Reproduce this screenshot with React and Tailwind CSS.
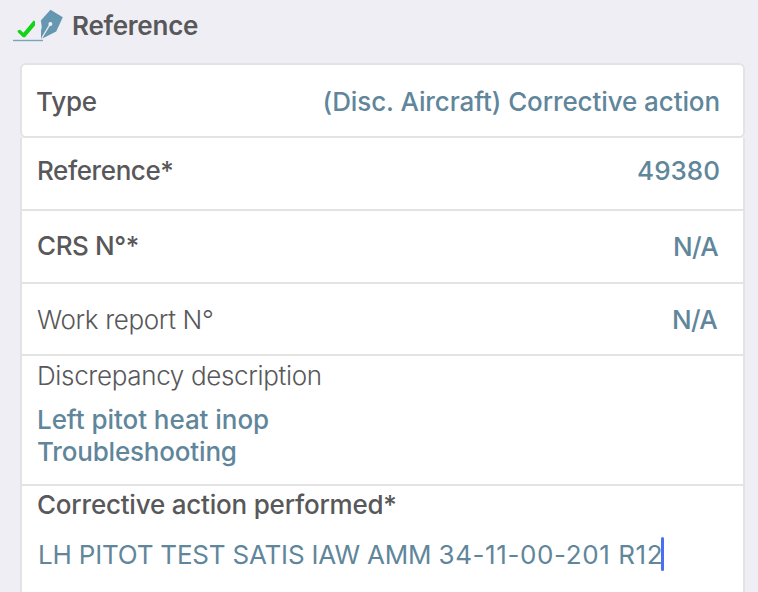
function SignIcon() {
  return (
    <svg width="52" height="34" viewBox="0 0 52 34" className="block shrink-0">
      <path d="M0 31.5H30" stroke="#78a5bb" strokeWidth="1.4" />
      <path d="M4.6 21.6L7.2 20.8L10.4 23.8L20.6 11.6L22 12.2V16.4L12 28.2L10 28.2L4.6 23Z" fill="#14d418" />
      <path d="M37.5 0.8L49.8 8.2L43.2 22.6L31.4 28.4L28 29.6L28 21.5L28.8 18L27.8 11.6Z" fill="#6697b0" />
      <path d="M28.8 29L36.8 15.6" stroke="#f0eff5" strokeWidth="1.2" />
      <circle cx="37.4" cy="15" r="2" fill="#f0eff5" />
    </svg>
  )
}

function Row({ className, children }) {
  return <div className={`flex justify-between border-x-2 border-b-2 border-[#e3e3e4] bg-white pl-[15px] ${className}`}>{children}</div>
}

export default function App() {
  return (
    <div className="flex h-[592px] w-[758px] flex-col overflow-hidden bg-[#efeef4] font-['Inter',sans-serif] text-[26px] leading-8 font-medium whitespace-nowrap text-[#58585a]">
      <div className="flex h-[63px] shrink-0 items-start pt-[9px] pl-[13px]">
        <SignIcon />
        <h1 className="mt-px ml-[7px] font-semibold tracking-[-0.25px]">Reference</h1>
      </div>

      <div className="box-content flex w-[725px] flex-col pl-5">
        <Row className="h-[75px] rounded-md border-t-2 pt-[21px] pr-[23px]">
          <span className="-ml-px tracking-[-0.2px]">Type</span>
          <span className="tracking-[-0.1px] text-[#5f869b]">(Disc. Aircraft) Corrective action</span>
        </Row>
        <Row className="h-[73px] pt-[17px] pr-[23px]">
          <span className="tracking-[-0.4px]">Reference*</span>
          <span className="text-[#5f869b]">49380</span>
        </Row>
        <Row className="h-[73px] pt-[19px] pr-[25px]">
          <span className="tracking-[-0.4px]">CRS N°*</span>
          <span className="pt-px tracking-[-0.7px] text-[#5f869b]">N/A</span>
        </Row>
        <Row className="h-[72px] pt-5 pr-[26px]">
          <span className="font-[365] tracking-[-0.35px]">Work report N°</span>
          <span className="tracking-[-0.7px] text-[#5f869b]">N/A</span>
        </Row>
        <Row className="h-[130px] flex-col justify-start! pt-1">
          <span className="font-[365] tracking-[-0.34px]">Discrepancy description</span>
          <span className="mt-3 tracking-[-0.05px] text-[#5f869b]">Left pitot heat inop</span>
          <span className="tracking-[-0.18px] text-[#5f869b]">Troubleshooting</span>
        </Row>
        <Row className="h-[120px] flex-col justify-start! pt-[3px]">
          <span className="tracking-[-0.21px]">Corrective action performed*</span>
          <div className="mt-[18px] flex pl-px text-[#5f869b]">
            <span className="font-[440]">
              <span className="tracking-[-0.2px]">LH PITOT TEST SATIS IAW AMM </span>
              <span className="tracking-[0.6px]">34-11-00-201 R12</span>
            </span>
            <span className="-mt-0.5 -ml-0.5 h-[34px] w-[3px] rounded-full bg-[#4a6ff0]" />
          </div>
        </Row>
      </div>
    </div>
  )
}
